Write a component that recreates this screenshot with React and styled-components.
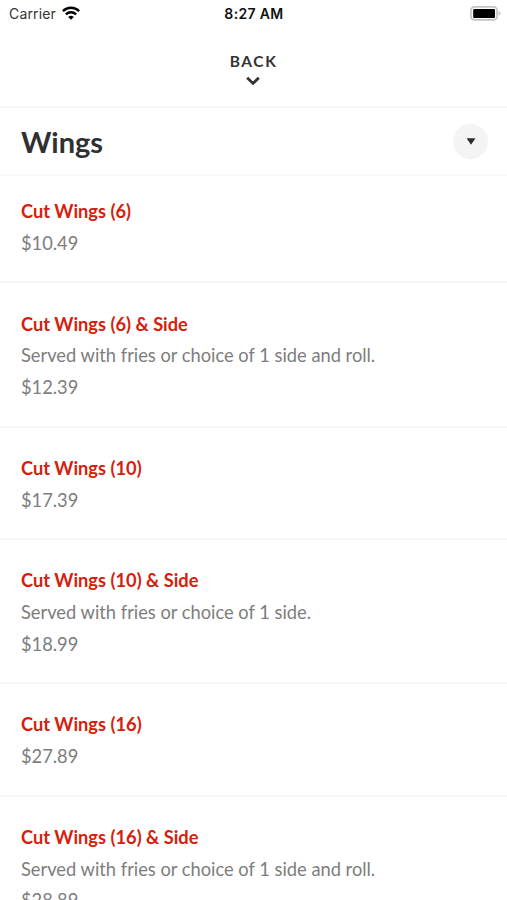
import React from 'react';
import styled, { createGlobalStyle } from 'styled-components';

const items = [
  { name: 'Cut Wings (6)', price: '$10.49' },
  {
    name: 'Cut Wings (6) & Side',
    body: 'Served with fries or choice of 1 side and roll.',
    price: '$12.39',
  },
  { name: 'Cut Wings (10)', price: '$17.39' },
  {
    name: 'Cut Wings (10) & Side',
    body: 'Served with fries or choice of 1 side.',
    price: '$18.99',
  },
  { name: 'Cut Wings (16)', price: '$27.89' },
  {
    name: 'Cut Wings (16) & Side',
    body: 'Served with fries or choice of 1 side and roll.',
    price: '$28.89',
  },
];

const WifiIcon = () => (
  <svg width="18" height="14" viewBox="0 0 18 14">
    <g fill="none" stroke="#000" strokeWidth="2.5">
      <path d="M0.9 5.1 A11.6 11.6 0 0 1 17.1 5.1" />
      <path d="M3.9 8.4 A7.3 7.3 0 0 1 14.1 8.4" />
    </g>
    <path d="M6.2 10.9 A4.3 4.3 0 0 1 11.8 10.9 L9 13.8 Z" fill="#000" />
  </svg>
);

const BatteryIcon = () => (
  <svg width="31" height="15" viewBox="0 0 31 15">
    <rect x="0.9" y="0.9" width="26.2" height="13" rx="3.6" fill="#fff" stroke="#c4c4c4" strokeWidth="1.7" />
    <rect x="3.2" y="3" width="21.8" height="8.9" rx="1" fill="#000" />
    <path d="M28.6 5.2 Q30.6 5.8 30.6 7.4 Q30.6 9 28.6 9.6 Z" fill="#c4c4c4" />
  </svg>
);

const App = () => {
  return (
    <Screen>
      <GlobalStyle />
      <StatusBar>
        <Carrier>
          Carrier <WifiIcon />
        </Carrier>
        <Time>8:27 AM</Time>
        <Battery>
          <BatteryIcon />
        </Battery>
      </StatusBar>
      <BackButton>
        BACK
        <svg width="14" height="10" viewBox="0 0 14 10">
          <path d="M1.2 1.8 L7 7.4 L12.8 1.8" fill="none" stroke="#333" strokeWidth="2.8" />
        </svg>
      </BackButton>
      <SectionHeader>
        <h1>Wings</h1>
        <RoundButton aria-label="Choose section">
          <svg width="10" height="7" viewBox="0 0 10 7">
            <path d="M0.6 0.3 H9.4 L5 6.8 Z" fill="#2b2c2d" />
          </svg>
        </RoundButton>
      </SectionHeader>
      <MenuList>
        {items.map((item) => (
          <MenuItem key={item.name}>
            <h2>{item.name}</h2>
            {item.body && <p>{item.body}</p>}
            <p>{item.price}</p>
          </MenuItem>
        ))}
      </MenuList>
    </Screen>
  );
};

const GlobalStyle = createGlobalStyle`
  * {
    box-sizing: border-box;
  }

  body {
    margin: 0;
    background: #fff;
  }

  h1, h2, p, ul {
    margin: 0;
    padding: 0;
  }
`;

const Screen = styled.div`
  height: 900px;
  overflow: hidden;
  background: #fff;
  color: #333;
  font-family: Lato, sans-serif;
`;

const StatusBar = styled.div`
  display: grid;
  grid-template-columns: 1fr auto 1fr;
  align-items: center;
  height: 27px;
  padding: 0 6px 0 9px;
  color: #111;
  font-family: Inter, sans-serif;
  font-size: 14px;
`;

const Carrier = styled.div`
  display: flex;
  align-items: center;
  gap: 6px;
  color: #333;
  letter-spacing: 0.15px;

  svg {
    margin-top: -1px;
  }
`;

const Time = styled.div`
  margin-right: 2px;
  font-weight: 600;
  letter-spacing: 0.35px;
`;

const Battery = styled.div`
  display: flex;
  justify-content: flex-end;
  margin-top: -1px;
`;

const BackButton = styled.button`
  display: flex;
  flex-direction: column;
  align-items: center;
  width: 100%;
  height: 81px;
  padding: 24px 0 0;
  border: 0;
  border-bottom: 2px solid #f7f7f7;
  background: none;
  color: #333;
  font: bold 15.5px/20px Lato, sans-serif;
  letter-spacing: 1.6px;

  svg {
    margin: 5px 1px 0 0;
  }
`;

const SectionHeader = styled.header`
  display: flex;
  align-items: center;
  justify-content: space-between;
  height: 68px;
  padding: 0 19px 0 21px;
  border-bottom: 2px solid #f8f8f8;

  h1 {
    padding-top: 2px;
    color: #2f3032;
    font-size: 29px;
    font-weight: bold;
    line-height: 36px;
  }
`;

const RoundButton = styled.button`
  display: flex;
  align-items: center;
  justify-content: center;
  width: 35px;
  height: 35px;
  padding: 0;
  border: 0;
  border-radius: 50%;
  background: #f4f4f4;
`;

const MenuList = styled.ul`
  list-style: none;
`;

const MenuItem = styled.li`
  padding: 25.2px 21px 21.6px;
  border-bottom: 2px solid #f5f5f5;
  color: #7d7d7d;
  font-size: 18.3px;
  line-height: 31.8px;

  &:first-child {
    padding-top: 20.3px;
  }

  h2 {
    color: #d6200c;
    font-size: 18.25px;
    font-weight: bold;
  }
`;

export default App;
